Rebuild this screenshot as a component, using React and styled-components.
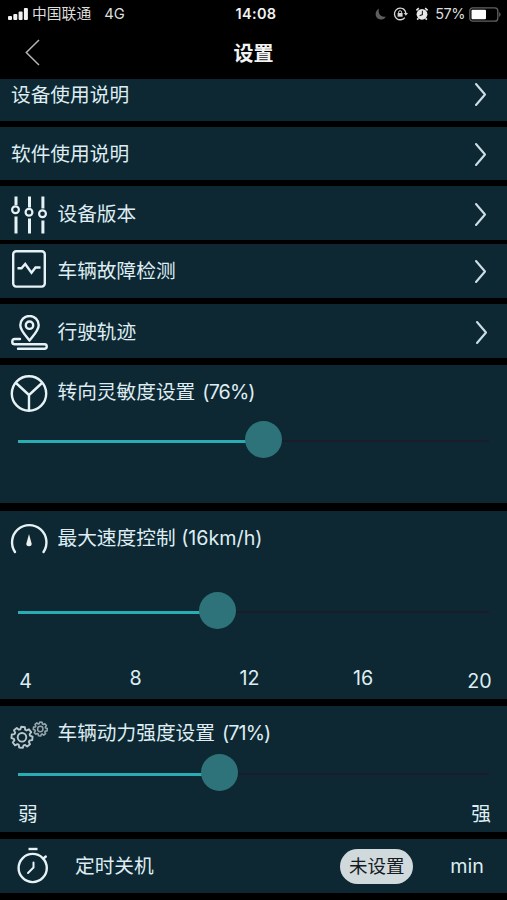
import React from "react"
import styled, { createGlobalStyle } from 'styled-components'

const GlobalStyle = createGlobalStyle`
    * {
        box-sizing: border-box;
    }
    body {
        margin: 0;
        background: #000000;
    }
`

const Screen = styled.div`
    width: 507px;
    height: 900px;
    overflow: hidden;
    background: #000000;
    color: #dfedf2;
    font-family: Inter, "Noto Sans CJK SC", sans-serif;
    font-size: 19.7px;
    line-height: 28px;
    white-space: nowrap;
`

const StatusBar = styled.div`
    height: 28px;
    padding: 0 6px 0 8px;
    display: grid;
    grid-template-columns: 1fr auto 1fr;
    align-items: center;
    font-size: 14.8px;
    color: #dddddd;
`

const StatusGroup = styled.div`
    display: flex;
    align-items: center;
    justify-content: ${props => props.$end ? 'flex-end' : 'flex-start'};
`

const Carrier = styled.span`
    margin: 0 13px 0 4px;
`

const Time = styled.span`
    padding-left: 3px;
    font-weight: 600;
    font-size: 14.5px;
    letter-spacing: 0.3px;
    color: #f2f2f2;
`

const Percent = styled.span`
    margin: 0 4px 0 6px;
    font-size: 14.5px;
    letter-spacing: -0.5px;
`

const NavBar = styled.div`
    height: 51px;
    padding: 0 24px 1px;
    display: grid;
    grid-template-columns: 60px 1fr 60px;
    align-items: center;
`

const Title = styled.h1`
    margin: 0;
    padding-top: 2px;
    font-size: 20px;
    font-weight: 700;
    text-align: center;
    color: #f2f2f2;
`

const Panel = styled.section`
    height: ${props => props.$height}px;
    margin-bottom: ${props => props.$gap || 6}px;
    background: #0d2832;
`

const Row = styled(Panel)`
    display: flex;
    align-items: center;
    padding: ${props => props.$top || 0}px ${props => props.$right || 20}px ${props => props.$bottom || 0}px 11px;
`

const IconBox = styled.span`
    width: 46.5px;
    padding-top: ${props => props.$drop || 0}px;
    padding-bottom: ${props => props.$lift || 0}px;
    display: flex;
    flex-shrink: 0;
`

const RowText = styled.span`
    flex: 1;
`

const PanelHead = styled.div`
    height: 56px;
    padding-left: 10px;
    display: flex;
    align-items: center;
`

const HeadText = styled.span`
    margin: 0 0 3px 1px;
`

const Reading = styled.span`
    margin-left: ${props => props.$tight ? 1.5 : 0}px;
    letter-spacing: ${props => props.$tight ? -0.9 : 0}px;
`

const Track = styled.div`
    position: relative;
    width: 471px;
    height: 2px;
    margin: ${props => props.$top}px 0 0 18px;
    background: #191d2b;
`

const Fill = styled.div`
    height: 3px;
    background: #29adb3;
`

const Thumb = styled.div`
    position: absolute;
    top: -19px;
    width: 37px;
    height: 37px;
    margin-left: -18.5px;
    border-radius: 50%;
    background: #2d7379;
`

const Scale = styled.div`
    margin-top: 51px;
    display: grid;
    grid-template-columns: 51px 169px 59px 168px 60px;
    text-align: center;
`

const Mark = styled.span`
    padding-top: ${props => props.$low ? 3 : 0}px;
    &:last-child {
        padding-left: 5px;
    }
`

const Ends = styled.div`
    margin-top: 25px;
    padding: 0 16px 0 18px;
    display: flex;
    justify-content: space-between;
`

const TimerIcon = styled.span`
    width: 64px;
    padding: 0 0 2px 6px;
    display: flex;
`

const Pill = styled.button`
    width: 73px;
    height: 35px;
    margin-right: 37px;
    padding: 0;
    border: none;
    border-radius: 18px;
    background: #d0d9dc;
    color: #141a1d;
    font: inherit;
    font-size: 18.5px;
`

const line = {
    fill: "none",
    stroke: "#e6f2f6",
    strokeWidth: 2.4,
    strokeLinecap: "round",
    strokeLinejoin: "round"
}

function Chevron() {
    return (
        <svg width="13" height="25" viewBox="0 0 13 25">
            <path d="M2 2L11 12.5L2 23" {...line} stroke="#cbdde5" strokeWidth="2.1" />
        </svg>
    )
}

function SignalIcon() {
    return (
        <svg width="20" height="12" viewBox="0 0 20 12" fill="#f2f2f2">
            <rect x="0" y="8" width="4" height="4" rx="1" />
            <rect x="5.3" y="6" width="4" height="6" rx="1" />
            <rect x="10.6" y="3.5" width="4" height="8.5" rx="1" />
            <rect x="15.9" y="0" width="4" height="12" rx="1" />
        </svg>
    )
}

function StatusIcons() {
    return (
        <svg width="56" height="16" viewBox="0 0 56 16">
            <path d="M6 2.6C1 5.4 1.6 13.2 7.8 13.6C10.2 13.8 12 12.6 12.8 10.6C7.8 11.8 4.6 7.4 6 2.6Z" fill="#5c5c61" />
            <path d="M31.2 3.7A5.8 5.8 0 1 0 31.8 11.6M29.7 2.7A5.8 5.8 0 0 1 32.8 8" fill="none" stroke="#d5d5d5" strokeWidth="1.3" />
            <path d="M30.7 7L35 7L32.9 9.8Z" fill="#d5d5d5" />
            <rect x="24.6" y="7" width="5" height="3.7" fill="#d5d5d5" />
            <path d="M25.6 7.4V6.2A1.5 1.5 0 0 1 28.6 6.2V7.4" fill="none" stroke="#d5d5d5" strokeWidth="1" />
            <circle cx="49" cy="8.3" r="5.4" fill="#e8e8e8" />
            <path d="M43.4 4.3L45.8 2.2M54.6 4.3L52.2 2.2M45.4 12.2L44.2 13.6M52.6 12.2L53.8 13.6" stroke="#e8e8e8" strokeWidth="1.7" />
            <path d="M49.4 4.8V8.6L46.6 9.8" fill="none" stroke="#222222" strokeWidth="1.1" />
        </svg>
    )
}

function BatteryIcon() {
    return (
        <svg width="32" height="15" viewBox="0 0 32 15">
            <rect x="0.8" y="0.8" width="28" height="13.4" rx="3" fill="none" stroke="#626262" strokeWidth="1.3" />
            <rect x="2.5" y="2.7" width="14.5" height="9.6" rx="1" fill="#ffffff" />
            <path d="M30.3 5.2C31.8 5.8 31.8 9.2 30.3 9.8Z" fill="#777777" />
        </svg>
    )
}

function BackIcon() {
    return (
        <svg width="17" height="28" viewBox="0 0 17 28">
            <path d="M15 1L2.3 13.5L15 26" fill="none" stroke="#b5b5b5" strokeWidth="1.5" />
        </svg>
    )
}

function SlidersIcon() {
    return (
        <svg width="36" height="38" viewBox="0 0 36 38" fill="none" stroke="#e6f2f6">
            <path d="M5 0.5V9M5 20.5V37.5M18.5 0.5V11.5M18.5 22.5V37.5M31.9 0.5V12.5M31.9 24.5V37.5" strokeWidth="3" />
            <circle cx="4.5" cy="13.7" r="3.4" strokeWidth="2.2" />
            <circle cx="18" cy="16.2" r="3.4" strokeWidth="2.2" />
            <circle cx="31.5" cy="17.8" r="3.4" strokeWidth="2.2" />
        </svg>
    )
}

function DiagnoseIcon() {
    return (
        <svg width="36" height="38" viewBox="0 0 36 38">
            <rect x="2.2" y="1.2" width="31.6" height="35.4" rx="3" {...line} />
            <path d="M6.5 18.2H10.5L14.2 14L20.5 22.8L24.5 17.5H29.5" {...line} strokeLinecap="butt" strokeLinejoin="miter" />
        </svg>
    )
}

function TrackIcon() {
    return (
        <svg width="38" height="36" viewBox="0 0 38 36">
            <path d="M18.5 25.5C13 18.5 9.3 15 9.3 10.2A9.2 9.2 0 0 1 27.7 10.2C27.7 15 24 18.5 18.5 25.5Z" {...line} />
            <circle cx="18.5" cy="10.2" r="3.7" {...line} />
            <path d="M9 24H3.9A2.6 2.6 0 0 0 3.9 29.3H33.5A2.2 2.2 0 0 1 33.5 33.8H7" {...line} />
        </svg>
    )
}

function WheelIcon() {
    return (
        <svg width="39" height="39" viewBox="0 0 39 39">
            <circle cx="19" cy="19.5" r="17.2" {...line} />
            <path d="M6 9L19 21L32 9M19 21V36" {...line} />
        </svg>
    )
}

function SpeedIcon() {
    return (
        <svg width="39" height="31" viewBox="0 0 39 31">
            <path d="M5 29A17.2 17.2 0 1 1 33.5 29" {...line} />
            <path d="M19 11L21.6 20.5Q22 23.3 19 23.3Q16 23.3 16.4 20.5Z" fill="#eef1ea" />
        </svg>
    )
}

// outline of a cog with eight teeth
function gear(cx, cy, r, depth) {
    const points = []
    for (let i = 0; i < 8; i++) {
        [[-0.3, r - depth], [-0.17, r], [0.17, r], [0.3, r - depth]].forEach(([shift, radius]) => {
            const a = i * Math.PI / 4 + shift + 0.1
            points.push(`${(cx + radius * Math.sin(a)).toFixed(2)},${(cy - radius * Math.cos(a)).toFixed(2)}`)
        })
    }
    return points.join(' ')
}

function GearsIcon() {
    return (
        <svg width="39" height="29" viewBox="0 0 39 29" fill="none" stroke="#b9c8ce" strokeLinejoin="round">
            <polygon points={gear(12, 17.3, 10.6, 2.4)} strokeWidth="1.9" />
            <circle cx="12" cy="17.3" r="4.3" strokeWidth="1.9" />
            <polygon points={gear(30.3, 9, 7, 1.6)} strokeWidth="1.6" stroke="#95a6ad" />
            <circle cx="30.3" cy="9" r="2.7" strokeWidth="1.5" stroke="#95a6ad" />
        </svg>
    )
}

function StopwatchIcon() {
    return (
        <svg width="32" height="37" viewBox="0 0 32 37">
            <circle cx="15.7" cy="21" r="14.1" {...line} />
            <path d="M11.5 2H20.5" {...line} strokeLinecap="butt" />
            <path d="M26.5 11.5L28.8 9.5" {...line} />
            <path d="M16.5 15.5V20.5L11 26" {...line} strokeWidth="2" />
        </svg>
    )
}

function Slider({ value, top }) {
    return (
        <Track $top={top}>
            <Fill style={{ width: `${value}%` }} />
            <Thumb style={{ left: `${value}%` }} />
        </Track>
    )
}

const marks = [4, 8, 12, 16, 20]

function App() {
    return (
        <>
            <GlobalStyle />
            <Screen>
                <StatusBar>
                    <StatusGroup>
                        <SignalIcon />
                        <Carrier>中国联通</Carrier>
                        <span>4G</span>
                    </StatusGroup>
                    <Time>14:08</Time>
                    <StatusGroup $end>
                        <StatusIcons />
                        <Percent>57%</Percent>
                        <BatteryIcon />
                    </StatusGroup>
                </StatusBar>
                <NavBar>
                    <BackIcon />
                    <Title>设置</Title>
                </NavBar>

                <Row $height={42} $bottom={11}>
                    <RowText>设备使用说明</RowText>
                    <Chevron />
                </Row>
                <Row $height={53} $top={1}>
                    <RowText>软件使用说明</RowText>
                    <Chevron />
                </Row>
                <Row $height={54} $gap={4} $top={2}>
                    <IconBox $drop={2}><SlidersIcon /></IconBox>
                    <RowText>设备版本</RowText>
                    <Chevron />
                </Row>
                <Row $height={54}>
                    <IconBox $lift={4}><DiagnoseIcon /></IconBox>
                    <RowText>车辆故障检测</RowText>
                    <Chevron />
                </Row>
                <Row $height={54} $gap={7} $top={2} $right={19}>
                    <IconBox $drop={1}><TrackIcon /></IconBox>
                    <RowText>行驶轨迹</RowText>
                    <Chevron />
                </Row>

                <Panel $height={138} $gap={8}>
                    <PanelHead>
                        <IconBox><WheelIcon /></IconBox>
                        <HeadText>转向灵敏度设置 <Reading $tight>(76%)</Reading></HeadText>
                    </PanelHead>
                    <Slider value={52.1} top={19} />
                </Panel>
                <Panel $height={188} $gap={7}>
                    <PanelHead>
                        <IconBox $lift={2}><SpeedIcon /></IconBox>
                        <HeadText>最大速度控制 <Reading>(16km/h)</Reading></HeadText>
                    </PanelHead>
                    <Slider value={42.4} top={44} />
                    <Scale>
                        {marks.map((mark, i) => (
                            <Mark key={mark} $low={i === 0 || i === marks.length - 1}>{mark}</Mark>
                        ))}
                    </Scale>
                </Panel>
                <Panel $height={126} $gap={7}>
                    <PanelHead>
                        <IconBox><GearsIcon /></IconBox>
                        <HeadText>车辆动力强度设置 <Reading $tight>(71%)</Reading></HeadText>
                    </PanelHead>
                    <Slider value={42.7} top={11} />
                    <Ends>
                        <span>弱</span>
                        <span>强</span>
                    </Ends>
                </Panel>
                <Row $height={54} $right={23}>
                    <TimerIcon><StopwatchIcon /></TimerIcon>
                    <RowText>定时关机</RowText>
                    <Pill>未设置</Pill>
                    <span>min</span>
                </Row>
            </Screen>
        </>
    )
}

export default App
